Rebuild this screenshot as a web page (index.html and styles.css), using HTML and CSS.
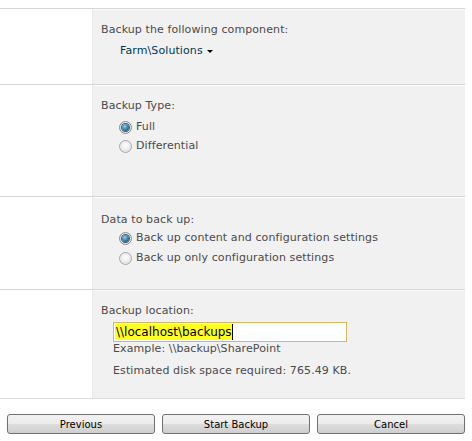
FILE: index.html
```html
<!DOCTYPE html>
<html lang="en">
<head>
  <meta charset="UTF-8" />
  <title>Perform a Backup</title>
  <link rel="stylesheet" href="styles.css">
</head>
<body>

<div class="backup-form">

  <!-- Component -->
  <div class="section row-component">
    <div class="section-side"></div>
    <div class="section-body">
      <div class="field-label">Backup the following component:</div>
      <div class="component-pick">Farm\Solutions <span class="caret"></span></div>
    </div>
  </div>

  <!-- Backup type -->
  <div class="section row-type">
    <div class="section-side"></div>
    <div class="section-body">
      <div class="field-label">Backup Type:</div>
      <div class="options">
        <label class="option"><input type="radio" name="type" checked> Full</label>
        <label class="option"><input type="radio" name="type"> Differential</label>
      </div>
    </div>
  </div>

  <!-- Data -->
  <div class="section row-data">
    <div class="section-side"></div>
    <div class="section-body">
      <div class="field-label">Data to back up:</div>
      <div class="options options-tight">
        <label class="option"><input type="radio" name="data" checked> Back up content and configuration settings</label>
        <label class="option"><input type="radio" name="data"> Back up only configuration settings</label>
      </div>
    </div>
  </div>

  <!-- Location -->
  <div class="section row-location">
    <div class="section-side"></div>
    <div class="section-body">
      <div class="field-label">Backup location:</div>
      <div class="location">
        <div class="text-box"><span class="selected">\\localhost\backups</span></div>
        <div class="hint">Example: \\backup\SharePoint</div>
        <div class="hint hint-space">Estimated disk space required: 765.49 KB.</div>
      </div>
    </div>
  </div>

  <div class="buttons">
    <button>Previous</button>
    <button>Start Backup</button>
    <button>Cancel</button>
  </div>

</div>

</body>
</html>
```

FILE: styles.css
```css
* {
  box-sizing: border-box;
}

body {
  margin: 0;
  padding-top: 8px;
  background: #fff;
  font-family: "DejaVu Sans", Verdana, sans-serif;
  font-size: 11px;
  letter-spacing: 0.1px;
  color: #4a4a4a;
}

.backup-form {
  width: 465px;
}

.section {
  display: grid;
  grid-template-columns: 92px 1fr;
  border-top: 1px solid #d6d6d6;
  box-shadow: inset 0 1px 0 #fff;
}

.row-component { height: 76px; }
.row-type { height: 112px; }
.row-data { height: 93px; }
.row-location {
  height: 110px;
  border-bottom: 1px solid #dcdcdc;
}

.section-body {
  background: #f1f1f1;
  border-left: 1px solid #ebebeb;
  border-top: 1px solid #fafafa;
  padding: 13px 8px 0;
}

.row-data .section-body {
  padding-top: 15px;
}

.field-label {
  line-height: 14px;
}

.component-pick {
  margin: 7px 0 0 19px;
  color: #003759;
  line-height: 14px;
}

.caret {
  display: inline-block;
  width: 0;
  height: 0;
  margin-left: 1px;
  vertical-align: middle;
  border-left: 3px solid transparent;
  border-right: 3px solid transparent;
  border-top: 3px solid #000;
}

.options {
  margin: 7px 0 0 18px;
  display: flex;
  flex-direction: column;
  gap: 5px;
}

.options-tight {
  margin-top: 4px;
  gap: 6px;
}

.option {
  display: flex;
  align-items: center;
  gap: 4px;
  line-height: 14px;
}

.option input {
  appearance: none;
  margin: 0;
  width: 13px;
  height: 13px;
  border-radius: 50%;
  border: 1px solid #a8a8a8;
  background: radial-gradient(circle at 50% 40%, #ffffff, #d8d8d8);
  display: grid;
  place-items: center;
}

.option input:checked {
  border-color: #8c8c8c;
}

.option input:checked::after {
  content: "";
  width: 7px;
  height: 7px;
  border-radius: 50%;
  background: radial-gradient(circle at 40% 35%, #8fd0ef, #1b6290 70%);
  box-shadow: 0 0 0 1px #3e5a6c;
}

.location {
  margin: 4px 0 0 12px;
}

.text-box {
  width: 234px;
  height: 20px;
  border: 1px solid #d9b860;
  background: #fff;
  padding: 1px;
  font-family: "DejaVu Sans", Tahoma, sans-serif;
  font-size: 12px;
  letter-spacing: 0;
  color: #000;
}

.selected {
  display: inline-block;
  height: 16px;
  line-height: 16px;
  background: #ffff22;
  padding-left: 1px;
  border-right: 1px solid #000;
}

.hint {
  margin-top: 0;
  line-height: 14px;
}

.hint-space {
  margin-top: 8px;
}

.buttons {
  display: flex;
  gap: 7px;
  padding: 15px 0 0 7px;
}

.buttons button {
  width: 148px;
  height: 20px;
  border: 1px solid #707070;
  border-radius: 3px;
  background: linear-gradient(#f2f2f2 0%, #ebebeb 50%, #dddddd 51%, #cfcfcf 100%);
  font-family: "DejaVu Sans", Tahoma, sans-serif;
  font-size: 10px;
  letter-spacing: 0;
  color: #000;
  padding: 0;
}
```
